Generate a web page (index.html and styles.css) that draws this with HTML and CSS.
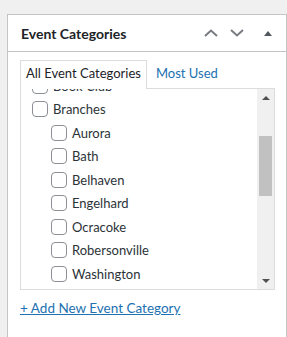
FILE: index.html
```html
<!DOCTYPE html>
<html lang="en">
<head>
  <meta charset="UTF-8" />
  <title>Event Categories</title>
  <link rel="stylesheet" href="styles.css">
</head>
<body>
  <div class="postbox">
    <div class="postbox-header">
      <h2>Event Categories</h2>
      <div class="handle-actions">
        <button class="handle-btn order" aria-label="Move up">
          <svg width="14" height="8" viewBox="0 0 14 8"><polyline points="1,7 7,1.5 13,7" fill="none" stroke="#787c82" stroke-width="2"/></svg>
        </button>
        <button class="handle-btn order" aria-label="Move down">
          <svg width="14" height="8" viewBox="0 0 14 8"><polyline points="1,1 7,6.5 13,1" fill="none" stroke="#787c82" stroke-width="2"/></svg>
        </button>
        <button class="handle-btn toggle" aria-label="Toggle panel">
          <svg width="8" height="5" viewBox="0 0 8 5"><polygon points="0,5 4,0 8,5" fill="#50575e"/></svg>
        </button>
      </div>
    </div>

    <div class="inside">
      <ul class="category-tabs">
        <li class="tab active">All Event Categories</li>
        <li class="tab"><a href="#">Most Used</a></li>
      </ul>

      <div class="tabs-panel">
        <div class="checklist-view">
          <ul class="checklist">
            <li><label><input type="checkbox"> Book Club</label></li>
            <li><label><input type="checkbox"> Branches</label>
              <ul class="children">
                <li><label><input type="checkbox"> Aurora</label></li>
                <li><label><input type="checkbox"> Bath</label></li>
                <li><label><input type="checkbox"> Belhaven</label></li>
                <li><label><input type="checkbox"> Engelhard</label></li>
                <li><label><input type="checkbox"> Ocracoke</label></li>
                <li><label><input type="checkbox"> Robersonville</label></li>
                <li><label><input type="checkbox"> Washington</label></li>
              </ul>
            </li>
          </ul>
        </div>
        <div class="scrollbar">
          <div class="scroll-arrow up"></div>
          <div class="scroll-track">
            <div class="scroll-thumb"></div>
          </div>
          <div class="scroll-arrow down"></div>
        </div>
      </div>

      <p class="adder"><a href="#">+ Add New Event Category</a></p>
    </div>
  </div>
</body>
</html>
```

FILE: styles.css
```css
html, body {
  height: 100%;
}

body {
  margin: 0;
  padding: 14px 0 0 7px;
  background: #f0f0f1;
  font-family: Lato, "Noto Sans", sans-serif;
  font-size: 13px;
  color: #1d2327;
  overflow: hidden;
  box-sizing: border-box;
}

.postbox {
  width: 280px;
  box-sizing: border-box;
  background: #fff;
  border: 1px solid #c3c4c7;
  min-height: 360px;
}

.postbox-header {
  display: flex;
  align-items: center;
  height: 36px;
  border-bottom: 1px solid #c3c4c7;
}

.postbox-header h2 {
  flex: 1;
  margin: 0;
  padding: 2px 12px 0 13px;
  font-size: 14px;
  font-weight: 700;
  line-height: 1.4;
  color: #1d2327;
}

.handle-actions {
  display: flex;
  height: 36px;
}

.handle-btn {
  display: flex;
  align-items: center;
  justify-content: center;
  height: 36px;
  padding: 0;
  border: none;
  background: none;
  cursor: pointer;
}

.handle-btn.order {
  width: 26px;
}

.handle-btn.toggle {
  width: 36px;
}

.inside {
  padding: 8px 11px 12px 12px;
}

.category-tabs {
  display: flex;
  gap: 3px;
  margin: 0;
  padding: 0;
  list-style: none;
}

.tab {
  padding: 2px 5px 5px;
  line-height: 20px;
  border: 1px solid transparent;
  border-bottom: none;
}

.tab.active {
  border-color: #dcdcde;
  background: #fff;
  margin-bottom: -1px;
  position: relative;
}

.tab a {
  color: #2271b1;
  text-decoration: none;
}

.tabs-panel {
  display: flex;
  height: 200px;
  border: 1px solid #dcdcde;
  background: #fff;
}

.checklist-view {
  flex: 1;
  overflow: hidden;
  padding: 0 11px;
}

.checklist, .children {
  margin: 0;
  padding: 0;
  list-style: none;
}

.checklist {
  margin-top: -15px;
}

.children {
  margin-left: 19px;
}

.checklist label {
  display: flex;
  align-items: center;
  height: 23.5px;
  color: #2c3338;
  white-space: nowrap;
}

.checklist input {
  appearance: none;
  -webkit-appearance: none;
  width: 16px;
  height: 16px;
  margin: 0 5px 0 0;
  border: 1px solid #8c8f94;
  border-radius: 4px;
  background: #fff;
  flex-shrink: 0;
}

.scrollbar {
  width: 17px;
  display: flex;
  flex-direction: column;
  background: #f0f0f0;
}

.scroll-arrow {
  height: 17px;
  display: flex;
  align-items: center;
  justify-content: center;
}

.scroll-arrow::before {
  content: "";
  border-left: 4px solid transparent;
  border-right: 4px solid transparent;
}

.scroll-arrow.up::before {
  border-bottom: 4px solid #505050;
}

.scroll-arrow.down::before {
  border-top: 4px solid #505050;
}

.scroll-track {
  flex: 1;
  padding: 30px 2px 0;
}

.scroll-thumb {
  height: 60px;
  background: #c1c1c1;
}

.adder {
  margin: 8px 0 0;
  line-height: 20px;
  font-size: 13.5px;
}

.adder a {
  color: #2271b1;
  text-decoration: underline;
}
```
